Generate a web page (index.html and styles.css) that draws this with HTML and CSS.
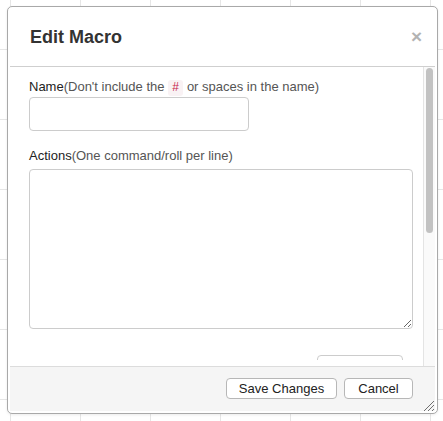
FILE: index.html
```html
<!DOCTYPE html>
<html>
<head>
<meta charset="utf-8">
<link rel="stylesheet" href="styles.css">
</head>
<body>
<div class="dialog">
  <div class="header">
    <h3 class="title">Edit Macro</h3>
    <span class="close">×</span>
  </div>
  <div class="body">
    <div class="clip">
      <div class="content">
        <label class="label"><span class="strong">Name</span>(Don't include the <code class="code">#</code> or spaces in the name)</label>
        <input class="input" type="text">
        <label class="label label-actions"><span class="strong">Actions</span>(One command/roll per line)</label>
        <textarea class="textarea"></textarea>
        <div class="options">
          <span class="opt-label">Show as Token Action?</span>
          <span class="select"></span>
        </div>
      </div>
    </div>
    <div class="scrollbar"><div class="thumb"></div></div>
  </div>
  <div class="footer">
    <button class="btn btn-save">Save Changes</button>
    <button class="btn btn-cancel">Cancel</button>
  </div>
  <svg class="grip" width="12" height="12" viewBox="0 0 12 12">
    <line x1="11" y1="1" x2="1" y2="11" stroke="#6f6f6f" stroke-width="1"/>
    <line x1="11" y1="5" x2="5" y2="11" stroke="#6f6f6f" stroke-width="1"/>
    <line x1="11" y1="9" x2="9" y2="11" stroke="#6f6f6f" stroke-width="1"/>
  </svg>
</div>
</body>
</html>
```

FILE: styles.css
```css
html, body {
  margin: 0;
  height: 100%;
}
body {
  padding: 6px 0 0 7px;
  box-sizing: border-box;
  background-color: #fff;
  background-image:
    linear-gradient(to right, #e6e6e6 1px, transparent 1px),
    linear-gradient(to bottom, #e6e6e6 1px, transparent 1px);
  background-size: 70px 70px;
  background-position: 10px 49px;
  font-family: "Liberation Sans", Arial, sans-serif;
  color: #333;
}
.dialog {
  position: relative;
  width: 431px;
  height: 408px;
  box-sizing: border-box;
  border: 1px solid #a9a9a9;
  border-radius: 5px;
  padding: 0 2px 2px 2px;
  background: #fff;
  display: flex;
  flex-direction: column;
  box-shadow: 0 1px 3px rgba(0,0,0,0.08);
}
.header {
  height: 60px;
  box-sizing: border-box;
  border-bottom: 1px solid #cfcfcf;
  padding: 20px 13px 0 20px;
  display: flex;
  justify-content: space-between;
  align-items: baseline;
}
.title {
  margin: 0;
  font-size: 18px;
  line-height: 20px;
  font-weight: bold;
  color: #333;
}
.close {
  font-size: 19px;
  line-height: 20px;
  font-weight: bold;
  color: #b3b3b3;
}
.body {
  height: 299px;
  display: flex;
}
.clip {
  flex: 1;
  height: 293px;
  overflow: hidden;
}
.content {
  padding: 11px 10px 0 19px;
  display: flex;
  flex-direction: column;
  align-items: flex-start;
}
.label {
  font-size: 13px;
  line-height: 18px;
  color: #555;
}
.strong {
  color: #222;
}
.code {
  font-family: "Liberation Mono", monospace;
  font-size: 12px;
  color: #c7254e;
  background: #f9f2f4;
  padding: 1px 4px;
  border-radius: 3px;
}
.input {
  width: 220px;
  height: 34px;
  box-sizing: border-box;
  border: 1px solid #cccccc;
  border-radius: 4px;
  margin: 0;
  padding: 4px 6px;
  background: #fff;
}
.label-actions {
  margin-top: 16px;
}
.textarea {
  margin: 4px 0 0 0;
  width: 384px;
  height: 160px;
  box-sizing: border-box;
  border: 1px solid #cccccc;
  border-radius: 4px;
  padding: 4px 6px;
  resize: both;
  background: #fff;
}
.options {
  margin-top: 26px;
  width: 374px;
  display: flex;
  justify-content: space-between;
  align-items: flex-start;
}
.opt-label {
  font-size: 13px;
  line-height: 18px;
  color: #555;
  padding: 1px 0 0 1px;
}
.select {
  width: 86px;
  height: 30px;
  box-sizing: border-box;
  border: 1px solid #cccccc;
  border-radius: 4px;
  margin-right: 0;
}
.scrollbar {
  width: 12px;
  box-sizing: border-box;
  border-left: 1px solid #e4e4e4;
  background: #fafafa;
  padding: 1px 2px 0 2px;
}
.thumb {
  width: 7px;
  height: 165px;
  background: #c2c2c2;
  border-radius: 4px;
}
.footer {
  height: 45px;
  box-sizing: border-box;
  border-top: 1px solid #dcdcdc;
  background: #f5f5f5;
  padding: 11px 22px 0 0;
  display: flex;
  justify-content: flex-end;
  align-items: flex-start;
  gap: 7px;
}
.btn {
  height: 21px;
  box-sizing: border-box;
  margin: 0;
  padding: 0;
  border: 1px solid #b7b7b7;
  border-radius: 4px;
  background: #fff;
  font-family: "Liberation Sans", Arial, sans-serif;
  font-size: 13px;
  line-height: 19px;
  color: #222;
  text-align: center;
}
.btn-save {
  width: 111px;
}
.btn-cancel {
  width: 69px;
}
.grip {
  position: absolute;
  right: 2px;
  bottom: 1px;
}
```
